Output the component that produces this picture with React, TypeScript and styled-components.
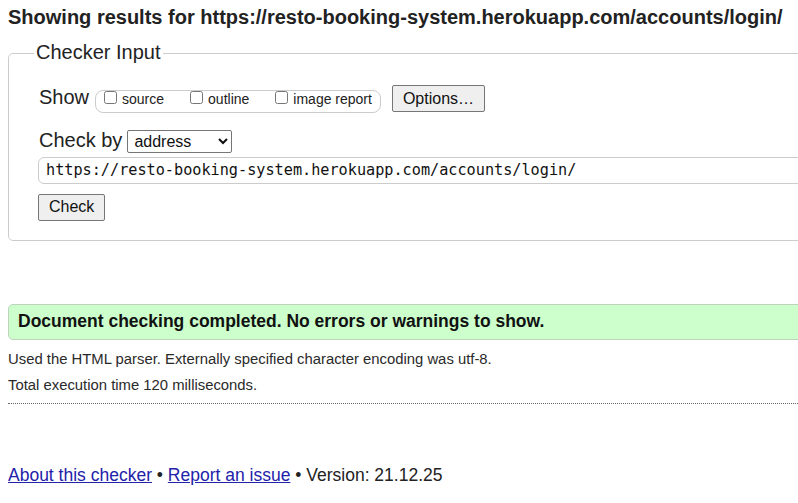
import React from 'react';
import styled, { createGlobalStyle } from 'styled-components';

const GlobalStyle = createGlobalStyle`
  html, body {
    margin: 0;
    padding: 0;
    background: #fff;
    overflow: hidden;
  }
  body {
    font-family: "Liberation Sans", Arial, sans-serif;
    color: #222;
  }
`;

const Page = styled.div`
  width: 900px;
  padding: 6px 8px 0 8px;
`;

const Heading = styled.h2`
  margin: 0;
  font-size: 20px;
  line-height: 22px;
  font-weight: bold;
  color: #222;
  white-space: nowrap;
`;

const Fieldset = styled.fieldset`
  margin: 14px 0 0 0;
  padding: 0 0 19px 30px;
  border: 1px solid #ccc;
  border-radius: 5px;
`;

const Legend = styled.legend`
  margin-left: -5px;
  padding: 0 2px 3px 2px;
  font-size: 20px;
  line-height: 20px;
  color: #222;
`;

const Row = styled.div<{ $top: number }>`
  display: flex;
  align-items: baseline;
  margin-top: ${p => p.$top}px;
`;

const RowLabel = styled.span<{ $gap?: number }>`
  font-size: 20px;
  line-height: 23px;
  margin-right: ${p => p.$gap ?? 0}px;
  color: #222;
`;

const CheckGroup = styled.span`
  display: inline-flex;
  align-items: baseline;
  height: 23px;
  box-sizing: border-box;
  padding: 0 8px 0 8px;
  border: 1px solid #ccc;
  border-radius: 8px;
  font-size: 14px;
  line-height: 16px;
`;

const CheckItem = styled.label`
  display: inline-flex;
  align-items: baseline;
  margin-right: 26px;
  color: #222;

  &:last-child {
    margin-right: 0;
  }

  input {
    width: 13px;
    height: 13px;
    margin: 0 5px 2px 0;
  }
`;

const Button = styled.button<{ $gap?: number }>`
  font-family: "Liberation Sans", Arial, sans-serif;
  font-size: 16px;
  height: 27px;
  padding: 0 10px;
  margin-left: ${p => p.$gap ?? 0}px;
  background: #efefef;
  color: #111;
  border: 1px solid #767676;
  border-radius: 2px;
`;

const Select = styled.select`
  font-family: "Liberation Sans", Arial, sans-serif;
  font-size: 16px;
  width: 105px;
  height: 23px;
  margin-left: 5px;
  padding: 0 2px;
  border: 1px solid #767676;
  border-radius: 2px;
  background: #fff;
  color: #111;
`;

const UrlInput = styled.input`
  display: block;
  box-sizing: border-box;
  width: 840px;
  height: 27px;
  margin: 4px 0 0 -1px;
  padding: 0 7px;
  font-family: "DejaVu Sans Mono", "Liberation Mono", monospace;
  font-size: 15.2px;
  color: #111;
  border: 1px solid #ccc;
  border-radius: 6px;
  background: #fff;
`;

const ButtonRow = styled.div`
  margin: 10px 0 0 -1px;
`;

const Success = styled.p`
  margin: 63px 0 0 0;
  padding: 0 9px;
  height: 36px;
  box-sizing: border-box;
  display: flex;
  align-items: center;
  background: #ccffcc;
  border: 1px solid #bcd3bc;
  border-radius: 5px;
  font-size: 17.5px;
  font-weight: bold;
  color: #111;
`;

const Info = styled.p<{ $top: number }>`
  margin: ${p => p.$top}px 0 0 0;
  font-size: 14.85px;
  line-height: 17px;
  color: #2a2a2a;
`;

const Rule = styled.hr`
  margin: 9px 0 0 0;
  border: 0;
  border-top: 1px dotted #666;
  height: 0;
`;

const Footer = styled.p`
  margin: 61px 0 0 0;
  font-size: 17.5px;
  line-height: 20px;
  color: #222;

  a {
    color: #2222aa;
    text-decoration: underline;
  }
`;

const App: React.FC = () => {
  const url = 'https://resto-booking-system.herokuapp.com/accounts/login/';

  return (
    <>
      <GlobalStyle />
      <Page>
        <Heading>Showing results for {url}</Heading>

        <Fieldset>
          <Legend>Checker Input</Legend>

          <Row $top={20}>
            <RowLabel $gap={6}>Show</RowLabel>
            <CheckGroup>
              <CheckItem><input type="checkbox" />source</CheckItem>
              <CheckItem><input type="checkbox" />outline</CheckItem>
              <CheckItem><input type="checkbox" />image report</CheckItem>
            </CheckGroup>
            <Button $gap={11}>Options…</Button>
          </Row>

          <Row $top={16}>
            <RowLabel>Check by</RowLabel>
            <Select defaultValue="address">
              <option value="address">address</option>
              <option value="upload">file upload</option>
              <option value="text">text input</option>
            </Select>
          </Row>

          <UrlInput type="url" defaultValue={url} />

          <ButtonRow>
            <Button>Check</Button>
          </ButtonRow>
        </Fieldset>

        <Success>Document checking completed. No errors or warnings to show.</Success>

        <Info $top={11}>Used the HTML parser. Externally specified character encoding was utf-8.</Info>
        <Info $top={9}>Total execution time 120 milliseconds.</Info>

        <Rule />

        <Footer>
          <a href="#about">About this checker</a> • <a href="#issue">Report an issue</a> • Version: 21.12.25
        </Footer>
      </Page>
    </>
  );
};

export default App;
